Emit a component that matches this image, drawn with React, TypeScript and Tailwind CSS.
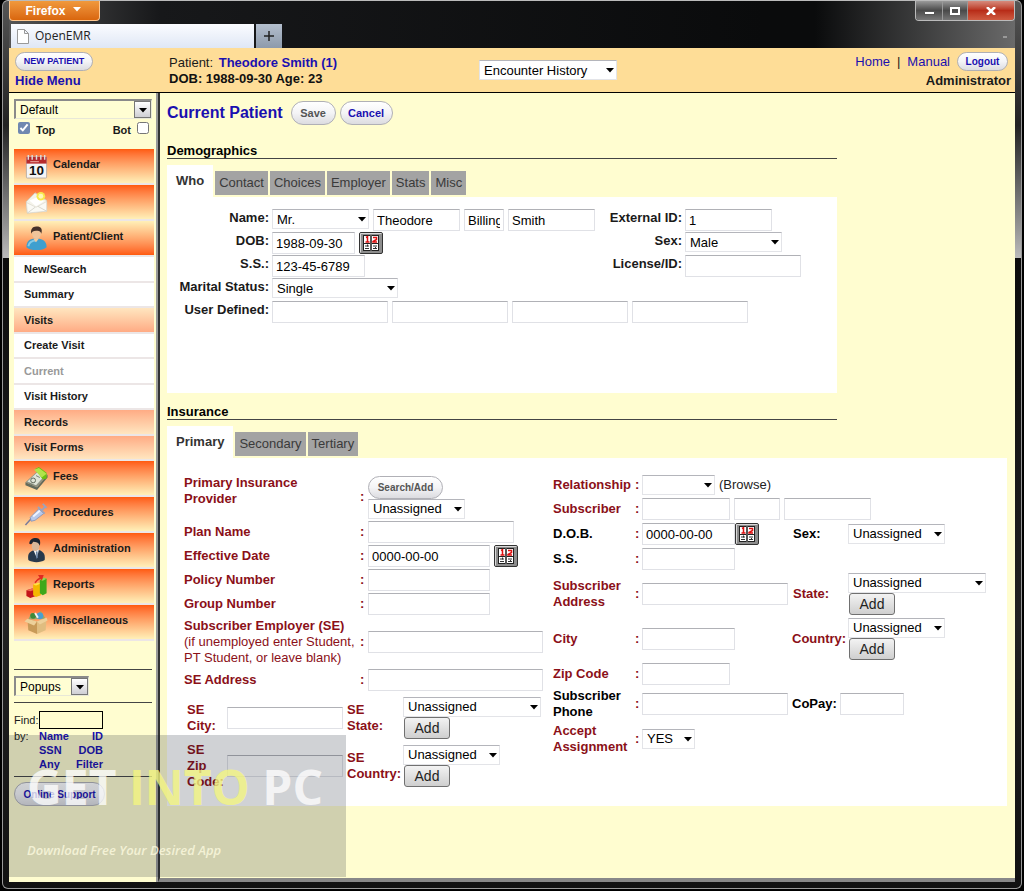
import type { ReactNode } from "react";
import { clsx } from "clsx";

type SelectProps = { label: string; id?: string; value?: string; className?: string; inset?: boolean };

function Caret({ className }: { className?: string }) {
    return (
        <svg viewBox="0 0 8 5" className={clsx("pointer-events-none absolute h-[5px] w-2", className)} fill="currentColor">
            <path d="M0 0h8L4 4.5z" />
        </svg>
    );
}

function Select({ label, id, value = "", className, inset }: SelectProps) {
    return (
        <span className={clsx("relative inline-block shrink-0 text-black", className)}>
            <select
                id={id}
                aria-label={id ? undefined : label}
                defaultValue={value}
                className={clsx(
                    "block h-5 w-full appearance-none border pl-1",
                    inset
                        ? "border-[#e8e8d8] border-t-2 border-l-2 border-t-[#8a8a8a] border-l-[#8a8a8a] bg-[#fffed3]"
                        : "border-[#e3e4e8] border-t-[#b4b5bb] bg-white"
                )}
            >
                <option>{value}</option>
            </select>
            {inset ? (
                <span className="pointer-events-none absolute top-[2px] right-px flex h-[17px] w-[17px] border border-[#777] bg-linear-to-b from-white to-[#cfcfd4]">
                    <Caret className="top-[6px] left-1" />
                </span>
            ) : (
                <Caret className="top-2 right-[3px]" />
            )}
        </span>
    );
}

function TextInput({ label, id, value = "", className }: { label: string; id?: string; value?: string; className?: string }) {
    return (
        <input
            id={id}
            aria-label={id ? undefined : label}
            type="text"
            defaultValue={value}
            className={clsx("h-[22px] shrink-0 border border-[#e0e1e6] border-t-[#b0b1b6] bg-white px-[3px] text-black", className)}
        />
    );
}

function PillButton({ children, className }: { children: ReactNode; className?: string }) {
    return (
        <button
            type="button"
            className={clsx(
                "rounded-full border border-[#b0b0b6] bg-linear-to-b from-white via-[#f4f4f6] to-[#dcdce0] text-[11px] font-bold",
                className
            )}
        >
            {children}
        </button>
    );
}

function AddButton() {
    return (
        <button
            type="button"
            className="ml-px block h-[22px] w-[46px] rounded-[3px] border border-[#707070] bg-linear-to-b from-[#f3f3f3] to-[#cfcfcf] text-sm leading-5 font-normal text-[#222]"
        >
            Add
        </button>
    );
}

function DateButton({ className }: { className?: string }) {
    return (
        <button type="button" aria-label="Pick a date" className={clsx("h-[22px] w-6 shrink-0", className)}>
            <svg viewBox="0 0 24 22" className="h-full w-full">
                <rect x="0.5" y="0.5" width="23" height="21" rx="1.5" fill="#8d8d8d" stroke="#333" />
                <path d="M1.5 20.5V1.5h21" fill="none" stroke="#d8d8d8" />
                <rect x="4" y="3" width="16" height="16" fill="#222" />
                <path d="M5 4h6v7H5zM13 4h6v7h-6zM5 12h6v6H5zM13 12h6v6h-6z" fill="#fff" />
                <path d="M7 5.5l1.5-.8V10M6.5 10h4M14 5.5h3.5v2L14 9.5v.5h4" fill="none" stroke="#e01010" strokeWidth="1.5" />
                <path d="M6 14h4M6 16.5h4M14 14h4M14 16.5h4M8.5 12.5v2M16.5 15v2" stroke="#333" />
                <path d="M12 3v16" stroke="#888" />
            </svg>
        </button>
    );
}

const icons: Record<string, ReactNode> = {
    Calendar: (
        <>
            <rect x="2" y="3" width="21" height="22" rx="1" fill="#f5f5f5" stroke="#b9b0a8" />
            <path d="M2 3h21v7H2z" fill="#b72a2c" />
            <path d="M4 1v5M8 1v5M12.5 1v5M17 1v5M21 1v5" stroke="#ddd" strokeWidth="1.5" />
            <path d="M6 8h9" stroke="#efb0a8" />
            <text x="12.5" y="22" textAnchor="middle" fontSize="14" fontWeight="bold" fill="#111">10</text>
        </>
    ),
    Messages: (
        <>
            <path d="M2 12L11 3l12 8v11L3 24z" fill="#f4f3ea" stroke="#d5d0c2" />
            <path d="M5 11l12-5 3 6-8 5z" fill="#fff" />
            <path d="M2 13l10 5 11-6v10L3 24z" fill="#fafaf5" stroke="#d9d6cc" strokeWidth=".7" />
            <path d="M3 24l8-6M23 22l-9-5" stroke="#cfcdc4" strokeWidth=".8" />
            <circle cx="17" cy="6.5" r="4.5" fill="#f8ea4e" />
            <circle cx="17" cy="6.5" r="2.5" fill="#fff9b8" />
        </>
    ),
    "Patient/Client": (
        <>
            <path d="M2 22c0-7 4-9 10-9s11 2 11 9c-4 4-17 4-21 0z" fill="#3f9fcf" />
            <path d="M4 21c1-5 4-6 8-6" fill="none" stroke="#86cbe8" strokeWidth="2" />
            <path d="M9 13h6l-3 4z" fill="#f2c9a0" />
            <ellipse cx="12.5" cy="8" rx="4.5" ry="5.5" fill="#f0c49b" />
            <path d="M7 8c-1-5 2-8 6-7.5C17 .5 19 3 17.5 8 16.5 5 15 4.5 12 5 9 5 8 6 7 8z" fill="#46322a" />
        </>
    ),
    Fees: (
        <>
            <path d="M1 17l12-11 11 3-11 13z" fill="#8d9385" />
            <path d="M1 17l12 5v3L1 20zM13 22L24 9v3L13 25z" fill="#626a5c" />
            <path d="M3 16L14 6l8 3-10 11z" fill="#dfe4d8" />
            <path d="M11 3l4-2 8 6v6l-4 1z" fill="#6cc010" />
            <path d="M10 4l5-2 8 6-5 4z" fill="#b2e34b" />
            <circle cx="9" cy="15" r="2.5" fill="none" stroke="#5d6657" />
            <path d="M5 18l4 2M12 10l4 2" stroke="#768070" />
        </>
    ),
    Procedures: (
        <>
            <path d="M1 24l8-9" stroke="#777b9c" strokeWidth="1.5" />
            <path d="M6 16L15 7l5 5-9 7-4 1z" fill="#b8c9ea" stroke="#7f8fb8" strokeWidth=".8" />
            <path d="M9 15l7-6" stroke="#eef4ff" strokeWidth="2" />
            <path d="M14 5l7 7M18 9l4-5M19 2l4 4" stroke="#9ba3bd" strokeWidth="1.8" />
        </>
    ),
    Administration: (
        <>
            <path d="M4 23c-1-7 1-9 8-11 7 1 10 4 9 11-4 3-13 3-17 0z" fill="#28394c" />
            <path d="M9 12h6l-2 9z" fill="#f4f4f4" />
            <path d="M12 14l1.5 0L14 20l-1.5 2z" fill="#5a7698" />
            <ellipse cx="11.5" cy="8" rx="4" ry="5.5" fill="#d9b79a" />
            <path d="M5 6c0-4 3-6 7-6s5 3 4 8c-1-3-4-4-7-4-1 2-2 3-4 2z" fill="#1c2532" />
        </>
    ),
    Reports: (
        <>
            <path d="M2 17l6-2 4 1v7l-6 2-4-2z" fill="#c3141a" />
            <path d="M2 17l6-2 4 1-6 2z" fill="#f06a50" />
            <path d="M9 11l5-2 3 1v12l-5 2-3-2z" fill="#f5b800" />
            <path d="M9 11l5-2 3 1-5 2z" fill="#ffe14a" />
            <path d="M16 6l4-2 3 1v15l-4 2-3-2z" fill="#3da81b" />
            <path d="M16 6l4-2 3 1-4 2z" fill="#8fdc50" />
            <path d="M11 9c2-3 4-4 6-5" fill="none" stroke="#e02a20" strokeWidth="1.8" />
            <path d="M14 1l6 0-2 6z" fill="#e02a20" />
        </>
    ),
    Miscellaneous: (
        <>
            <path d="M4 10l3-7 5 3 5-5 5 8z" fill="#9aa66a" />
            <circle cx="9" cy="6" r="3" fill="#3e8a3c" />
            <circle cx="16" cy="6" r="3.5" fill="#4a9fd0" />
            <path d="M11 3l3 5" stroke="#f4f4f4" strokeWidth="2" />
            <path d="M3 9l10 3v13L4 21z" fill="#c89a58" />
            <path d="M13 12l10-4-1 13-9 4z" fill="#e0bd80" />
            <path d="M3 9l10 3-3 4-10-4zM23 8l-10 4 3 3 8-4z" fill="#edd09a" />
        </>
    ),
};

type MenuKind = "main" | "open" | "white" | "down" | "up";

function MenuItem({ text, kind, disabled }: { text: string; kind: MenuKind; disabled?: boolean }) {
    const big = kind === "main" || kind === "open";
    return (
        <a
            href="#"
            aria-disabled={disabled}
            className={clsx(
                "flex items-center border-b-2 border-[#ece6e6] pl-[10px]",
                big && "h-9 gap-1 pb-1",
                kind === "main" && "bg-linear-to-b from-[#ff5a0a] to-[#fff0b8]",
                kind === "open" && "bg-linear-to-t from-[#ff5a0a] to-[#fff0b8]",
                kind === "white" && "bg-white",
                kind === "down" && "bg-linear-to-b from-[#ffe6c0] to-[#ffab84]",
                kind === "up" && "bg-linear-to-b from-[#ffab84] to-[#ffe6c0]",
                disabled ? "text-[#999]" : "text-[#1a1a1a]"
            )}
        >
            {big && (
                <svg viewBox="0 0 25 26" className="mt-1 h-[25px] w-[25px] shrink-0">{icons[text]}</svg>
            )}
            {text}
        </a>
    );
}

const subItems: { text: string; kind: MenuKind; disabled?: boolean }[] = [
    { text: "New/Search", kind: "white" },
    { text: "Summary", kind: "white" },
    { text: "Visits", kind: "down" },
    { text: "Create Visit", kind: "white" },
    { text: "Current", kind: "white", disabled: true },
    { text: "Visit History", kind: "white" },
    { text: "Records", kind: "up" },
    { text: "Visit Forms", kind: "up" },
];

function Sidebar() {
    return (
        <aside className="w-[149px] shrink-0 border-r-2 border-[#999] bg-[#fffdd0] pt-[6px] pl-[5px]">
            <Select label="Layout" value="Default" inset className="w-[138px] text-xs" />
            <div className="flex h-[30px] items-start justify-between pt-[3px] pr-[7px] pl-1 text-[11px] font-bold">
                <label className="flex items-start gap-[6px]">
                    <input type="checkbox" defaultChecked className="h-3 w-3 accent-[#7088b0]" />
                    Top
                </label>
                <label className="flex items-start gap-[6px]">
                    Bot
                    <input type="checkbox" className="h-3 w-3" />
                </label>
            </div>
            <nav className="mr-[2px] text-[11px] font-bold">
                <MenuItem text="Calendar" kind="main" />
                <MenuItem text="Messages" kind="main" />
                <MenuItem text="Patient/Client" kind="open" />
                <div className="grid h-[204px] auto-rows-fr">
                    {subItems.map((item) => (
                        <MenuItem key={item.text} {...item} />
                    ))}
                </div>
                <MenuItem text="Fees" kind="main" />
                <MenuItem text="Procedures" kind="main" />
                <MenuItem text="Administration" kind="main" />
                <MenuItem text="Reports" kind="main" />
                <MenuItem text="Miscellaneous" kind="main" />
            </nav>
            <div className="mt-7 mr-1 border-y border-[#444] py-[6px] text-xs">
                <Select label="Popups" value="Popups" inset className="block w-[75px]" />
            </div>
            <form className="mr-1 border-b border-[#444] pt-2 pb-[5px] text-[11px]">
                <div className="flex items-center gap-[3px]">
                    <label htmlFor="find" className="w-[22px] whitespace-nowrap">Find:</label>
                    <input id="find" type="text" className="h-[18px] w-16 border border-black px-1" />
                </div>
                <div className="flex gap-[3px] leading-[14px]">
                    <span className="w-[22px]">by:</span>
                    <div className="grid w-16 grid-cols-2 font-bold text-[#1a10b0]">
                        <a href="#">Name</a>
                        <a href="#" className="text-right">ID</a>
                        <a href="#">SSN</a>
                        <a href="#" className="text-right">DOB</a>
                        <a href="#">Any</a>
                        <a href="#" className="text-right">Filter</a>
                    </div>
                </div>
            </form>
            <PillButton className="mt-[5px] h-6 w-[91px] whitespace-nowrap text-[#1a10b0]">
                <span className="text-[10px]">Online Support</span>
            </PillButton>
        </aside>
    );
}

function Tabs({ items }: { items: string[] }) {
    return (
        <div role="tablist" className="mt-[6px] flex items-end gap-[2px]">
            {items.map((item, i) =>
                i === 0 ? (
                    <button key={item} type="button" role="tab" aria-selected className="h-8 bg-white px-[9px] font-bold text-[#333]">
                        {item}
                    </button>
                ) : (
                    <button key={item} type="button" role="tab" aria-selected={false} className="mb-[2px] h-6 bg-[#a3a3a3] px-1 text-[#3a3a3a]">
                        {item}
                    </button>
                )
            )}
        </div>
    );
}

function SectionTitle({ children }: { children: ReactNode }) {
    return <h2 className="w-[79%] border-b border-[#444] leading-[15px] font-bold text-black">{children}</h2>;
}

function DemoRow({ label, id, labelClass, children }: { label: string; id: string; labelClass: string; children: ReactNode }) {
    return (
        <div className="flex h-[22px] items-start gap-[3px]">
            <label htmlFor={id} className={clsx("shrink-0 text-right leading-[18px] font-bold whitespace-nowrap", labelClass)}>
                {label}
            </label>
            <div className="flex gap-1">{children}</div>
        </div>
    );
}

function Demographics() {
    return (
        <section>
            <SectionTitle>Demographics</SectionTitle>
            <Tabs items={["Who", "Contact", "Choices", "Employer", "Stats", "Misc"]} />
            <div className="w-[79%] space-y-px bg-white pt-3 pb-[70px]">
                <div className="flex">
                    <div className="w-[430px] shrink-0 space-y-px">
                        <DemoRow label="Name:" id="title" labelClass="w-[102px]">
                            <Select label="Title" id="title" value="Mr." className="w-[97px]" />
                            <TextInput label="First name" value="Theodore" className="w-[87px]" />
                            <TextInput label="Middle name" value="Billing" className="w-10" />
                            <TextInput label="Last name" value="Smith" className="w-[87px]" />
                        </DemoRow>
                        <DemoRow label="DOB:" id="dob" labelClass="w-[102px]">
                            <TextInput label="DOB" id="dob" value="1988-09-30" className="w-[83px]" />
                            <DateButton />
                        </DemoRow>
                        <DemoRow label="S.S.:" id="ss" labelClass="w-[102px]">
                            <TextInput label="S.S." id="ss" value="123-45-6789" className="w-[93px]" />
                        </DemoRow>
                        <DemoRow label="Marital Status:" id="marital" labelClass="w-[102px]">
                            <Select label="Marital Status" id="marital" value="Single" className="w-[126px]" />
                        </DemoRow>
                    </div>
                    <div className="space-y-px">
                        <DemoRow label="External ID:" id="ext" labelClass="w-[85px]">
                            <TextInput label="External ID" id="ext" value="1" className="w-[87px]" />
                        </DemoRow>
                        <DemoRow label="Sex:" id="sex" labelClass="w-[85px]">
                            <Select label="Sex" id="sex" value="Male" className="w-[97px]" />
                        </DemoRow>
                        <DemoRow label="License/ID:" id="license" labelClass="w-[85px]">
                            <TextInput label="License/ID" id="license" className="w-[116px]" />
                        </DemoRow>
                    </div>
                </div>
                <DemoRow label="User Defined:" id="user1" labelClass="w-[102px]">
                    <TextInput label="User defined 1" id="user1" className="w-[116px]" />
                    <TextInput label="User defined 2" className="w-[116px]" />
                    <TextInput label="User defined 3" className="w-[116px]" />
                    <TextInput label="User defined 4" className="w-[116px]" />
                </DemoRow>
            </div>
        </section>
    );
}

type RowProps = { label: ReactNode; id: string; children: ReactNode; dark?: boolean; className?: string };

function LeftRow({ label, id, children, className }: RowProps) {
    return (
        <div className={clsx("flex items-center", className)}>
            <label htmlFor={id} className="w-44 shrink-0">{label}</label>
            <span className="w-2 shrink-0">:</span>
            {children}
        </div>
    );
}

function RightRow({ label, id, children, dark, className }: RowProps) {
    return (
        <div className={clsx("flex items-center", className)}>
            <label htmlFor={id} className={clsx("w-[82px] shrink-0", dark && "text-black")}>{label}</label>
            <span className="w-[7px] shrink-0">:</span>
            {children}
        </div>
    );
}

function SelectWithAdd({ label, id, className }: { label: string; id: string; className: string }) {
    return (
        <div>
            <Select label={label} id={id} value="Unassigned" className={clsx("font-normal", className)} />
            <AddButton />
        </div>
    );
}

function Insurance() {
    return (
        <section className="mt-[11px]">
            <SectionTitle>Insurance</SectionTitle>
            <Tabs items={["Primary", "Secondary", "Tertiary"]} />
            <div className="mr-2 flex gap-[10px] bg-white pt-[17px] pb-4 pl-[17px] leading-4 font-bold text-[#8b1018]">
                <div className="w-[359px] shrink-0 space-y-[2px]">
                    <LeftRow label={<>Primary Insurance<br />Provider</>} id="provider" className="[&>label]:pb-3">
                        <div className="flex flex-col items-start">
                            <PillButton className="h-[23px] w-[75px] text-[#555]">
                                <span className="text-[10px]">Search/Add</span>
                            </PillButton>
                            <Select label="Provider" id="provider" value="Unassigned" className="w-[97px] font-normal" />
                        </div>
                    </LeftRow>
                    <LeftRow label="Plan Name" id="plan">
                        <TextInput label="Plan Name" id="plan" className="w-[146px]" />
                    </LeftRow>
                    <LeftRow label="Effective Date" id="effective">
                        <TextInput label="Effective Date" id="effective" value="0000-00-00" className="w-[122px] font-normal" />
                        <DateButton className="ml-1" />
                    </LeftRow>
                    <LeftRow label="Policy Number" id="policy">
                        <TextInput label="Policy Number" id="policy" className="w-[122px]" />
                    </LeftRow>
                    <LeftRow label="Group Number" id="group">
                        <TextInput label="Group Number" id="group" className="w-[122px]" />
                    </LeftRow>
                    <LeftRow
                        id="employer"
                        className="py-px"
                        label={
                            <>
                                Subscriber Employer (SE)<br />
                                <span className="font-normal whitespace-nowrap">(if unemployed enter Student,<br />PT Student, or leave blank)</span>
                            </>
                        }
                    >
                        <TextInput label="Employer" id="employer" className="w-[175px]" />
                    </LeftRow>
                    <LeftRow label="SE Address" id="seaddr">
                        <TextInput label="SE Address" id="seaddr" className="w-[175px]" />
                    </LeftRow>
                    <div className="space-y-[3px] pt-1 pl-[3px]">
                        <div className="flex items-center">
                            <label htmlFor="secity" className="w-10 shrink-0">SE City:</label>
                            <TextInput label="SE City" id="secity" className="w-[116px]" />
                            <label htmlFor="sestate" className="mx-1 w-[52px] shrink-0">SE State:</label>
                            <SelectWithAdd label="SE State" id="sestate" className="w-[138px]" />
                        </div>
                        <div className="flex items-center">
                            <label htmlFor="sezip" className="w-10 shrink-0">SE Zip Code:</label>
                            <TextInput label="SE Zip Code" id="sezip" className="w-[116px]" />
                            <label htmlFor="secountry" className="mx-1 w-[52px] shrink-0">SE Country:</label>
                            <SelectWithAdd label="SE Country" id="secountry" className="w-[97px]" />
                        </div>
                    </div>
                </div>
                <div className="space-y-[3px]">
                    <RightRow label="Relationship" id="relation">
                        <Select label="Relationship" id="relation" className="w-[73px]" />
                        <a href="#" className="pl-1 font-normal text-[#222]">(Browse)</a>
                    </RightRow>
                    <RightRow label="Subscriber" id="subscriber">
                        <div className="flex gap-1">
                            <TextInput label="Subscriber first name" id="subscriber" className="w-[88px]" />
                            <TextInput label="Subscriber middle name" className="w-[46px]" />
                            <TextInput label="Subscriber last name" className="w-[87px]" />
                        </div>
                    </RightRow>
                    <RightRow label="D.O.B." id="subdob" dark>
                        <TextInput label="D.O.B." id="subdob" value="0000-00-00" className="w-[93px] font-normal" />
                        <DateButton />
                        <label htmlFor="subsex" className="ml-[34px] w-[55px] text-black">Sex:</label>
                        <Select label="Sex" id="subsex" value="Unassigned" className="w-[97px] font-normal" />
                    </RightRow>
                    <RightRow label="S.S." id="subss" dark>
                        <TextInput label="S.S." id="subss" className="w-[93px]" />
                    </RightRow>
                    <RightRow label="Subscriber Address" id="subaddr">
                        <TextInput label="Subscriber Address" id="subaddr" className="w-[146px]" />
                        <label htmlFor="substate" className="ml-[5px] w-[55px]">State:</label>
                        <SelectWithAdd label="State" id="substate" className="w-[138px]" />
                    </RightRow>
                    <RightRow label="City" id="subcity">
                        <TextInput label="City" id="subcity" className="w-[93px]" />
                        <label htmlFor="subcountry" className="ml-[57px] w-14">Country:</label>
                        <SelectWithAdd label="Country" id="subcountry" className="w-[97px]" />
                    </RightRow>
                    <RightRow label="Zip Code" id="subzip">
                        <TextInput label="Zip Code" id="subzip" className="w-[88px]" />
                    </RightRow>
                    <RightRow label="Subscriber Phone" id="subphone" dark>
                        <TextInput label="Subscriber Phone" id="subphone" className="w-[146px]" />
                        <label htmlFor="copay" className="ml-1 w-12 text-black">CoPay:</label>
                        <TextInput label="CoPay" id="copay" className="w-16" />
                    </RightRow>
                    <RightRow label="Accept Assignment" id="accept">
                        <Select label="Accept Assignment" id="accept" value="YES" className="w-[53px] font-normal" />
                    </RightRow>
                </div>
            </div>
        </section>
    );
}

function BrowserChrome() {
    return (
        <div className="flex h-[47px] items-stretch justify-between bg-linear-to-r from-[#555] from-0% via-[#17181a] via-15% to-[#0a0b0c] to-75%">
            <div className="flex flex-col justify-between">
                <button
                    type="button"
                    className="relative h-5 w-[91px] rounded-b border border-t-0 border-[#ffc890] bg-linear-to-b from-[#f0993c] to-[#d9660c] pr-[18px] text-xs font-bold text-white"
                >
                    Firefox
                    <Caret className="top-[6px] right-[18px]" />
                </button>
                <div className="flex gap-[2px] pl-[2px]">
                    <button type="button" className="flex h-6 w-[243px] items-center gap-[6px] bg-linear-to-b from-[#fbfcff] to-[#dfe7f5] pl-[6px] text-[#222]">
                        <svg viewBox="0 0 12 15" className="h-[15px] w-3" fill="#fff" stroke="#999">
                            <path d="M.5.5h7l4 4v10H.5zM7.5.5v4h4" />
                        </svg>
                        <span className="font-['Open_Sans',sans-serif] text-xs">OpenEMR</span>
                    </button>
                    <button type="button" aria-label="New tab" className="flex h-6 w-[26px] items-center justify-center bg-linear-to-b from-[#b4bfce] to-[#8d9aab]">
                        <svg viewBox="0 0 10 10" className="h-[10px] w-[10px]" stroke="#222" strokeWidth="1.5">
                            <path d="M5 0v10M0 5h10" />
                        </svg>
                    </button>
                </div>
            </div>
            <div className="flex w-[200px] flex-col items-end justify-between bg-linear-to-r from-transparent to-[#6a6a6a]">
                <div className="flex h-5 overflow-hidden rounded-b border border-t-0 border-[#bbb]">
                    <button type="button" aria-label="Minimize" className="flex w-[27px] items-center justify-center border-r border-[#999] bg-linear-to-b from-[#9a9a9a] via-[#4a4a4a] via-50% to-[#777]">
                        <span className="mt-1 h-[4px] w-[11px] border border-[#555] bg-white" />
                    </button>
                    <button type="button" aria-label="Maximize" className="flex w-[25px] items-center justify-center border-r border-[#999] bg-linear-to-b from-[#9a9a9a] via-[#4a4a4a] via-50% to-[#777]">
                        <span className="h-2 w-[10px] border-2 border-white" />
                    </button>
                    <button type="button" aria-label="Close" className="flex w-[46px] items-center justify-center bg-linear-to-b from-[#d58a7c] via-[#b82c18] via-50% to-[#cf5a40]">
                        <svg viewBox="0 0 10 8" className="h-2 w-[10px]" stroke="#fff" strokeWidth="2.5">
                            <path d="M1 0l8 8M9 0L1 8" />
                        </svg>
                    </button>
                </div>
                <span className="mr-2 mb-[10px] h-[2px] w-1 bg-[#999]" />
            </div>
        </div>
    );
}

function Header() {
    return (
        <header className="flex h-[45px] items-start border-b border-black bg-[#fedd97] pt-1">
            <div className="w-40 shrink-0 pl-[6px]">
                <PillButton className="block h-[19px] w-[78px] whitespace-nowrap text-[#1a10b0]">
                    <span className="block text-[9px]">NEW PATIENT</span>
                </PillButton>
                <a href="#" className="block font-bold text-[#1a10b0]">Hide Menu</a>
            </div>
            <div className="w-[310px] shrink-0 pt-[3px] leading-4">
                <div>Patient: <a href="#" className="ml-[2px] font-bold text-[#1a10b0]">Theodore Smith (1)</a></div>
                <div className="text-[#111] font-bold">DOB: 1988-09-30 Age: 23</div>
            </div>
            <Select label="Encounter History" value="Encounter History" className="mt-2 w-[138px]" />
            <div className="ml-auto pr-1 text-right">
                <div className="flex items-center justify-end gap-[7px]">
                    <a href="#" className="text-[#1a10b0]">Home</a>
                    <span>|</span>
                    <a href="#" className="text-[#1a10b0]">Manual</a>
                    <PillButton className="mr-[3px] h-[19px] w-[51px] text-[#1a10b0]">
                        <span className="block text-[10px]">Logout</span>
                    </PillButton>
                </div>
                <div className="leading-[18px] font-bold">Administrator</div>
            </div>
        </header>
    );
}

export default function App() {
    return (
        <div className="flex min-h-screen flex-col bg-black px-[2px] pb-[2px] font-['Liberation_Sans',Arial,sans-serif] text-[13px] text-[#1a1a1a]">
            <div className="relative flex flex-1 flex-col rounded-md border border-[#999] border-t-[#bbb] bg-[linear-gradient(#555,#222_14%,#999_26%,#bbb_29%,#0c0c0c_29%,#222_70%,#111)] px-[6px] pb-[6px]">
                <BrowserChrome />
                <div className="flex flex-1 flex-col">
                    <Header />
                    <div className="flex flex-1">
                        <Sidebar />
                        <main className="min-w-0 flex-1 border-b-4 border-l-2 border-b-[#888] border-l-[#333] bg-[#fffdd0] pt-2 pl-[7px]">
                            <div className="mb-[18px] flex h-6 items-center gap-1">
                                <h1 className="mr-1 text-base font-bold text-[#1a10b0]">Current Patient</h1>
                                <PillButton className="h-6 w-[45px] text-[#555]">
                                    Save
                                </PillButton>
                                <PillButton className="h-6 w-[53px] text-[#1a10b0]">
                                    Cancel
                                </PillButton>
                            </div>
                            <Demographics />
                            <Insurance />
                        </main>
                    </div>
                </div>
                <div className="pointer-events-none absolute bottom-[11px] left-[6px] h-[142px] w-[337px] bg-[#14202c]/20 pl-[18px] font-['Open_Sans',sans-serif] whitespace-nowrap">
                    <div className="pt-7 text-5xl leading-[48px] font-bold text-white/75">
                        GET <span className="text-[#f4f680]/80">INTO</span> PC
                    </div>
                    <div className="pt-[30px] text-[13px] font-semibold text-[#fdfbe0]/80 italic">Download Free Your Desired App</div>
                </div>
            </div>
        </div>
    );
}
